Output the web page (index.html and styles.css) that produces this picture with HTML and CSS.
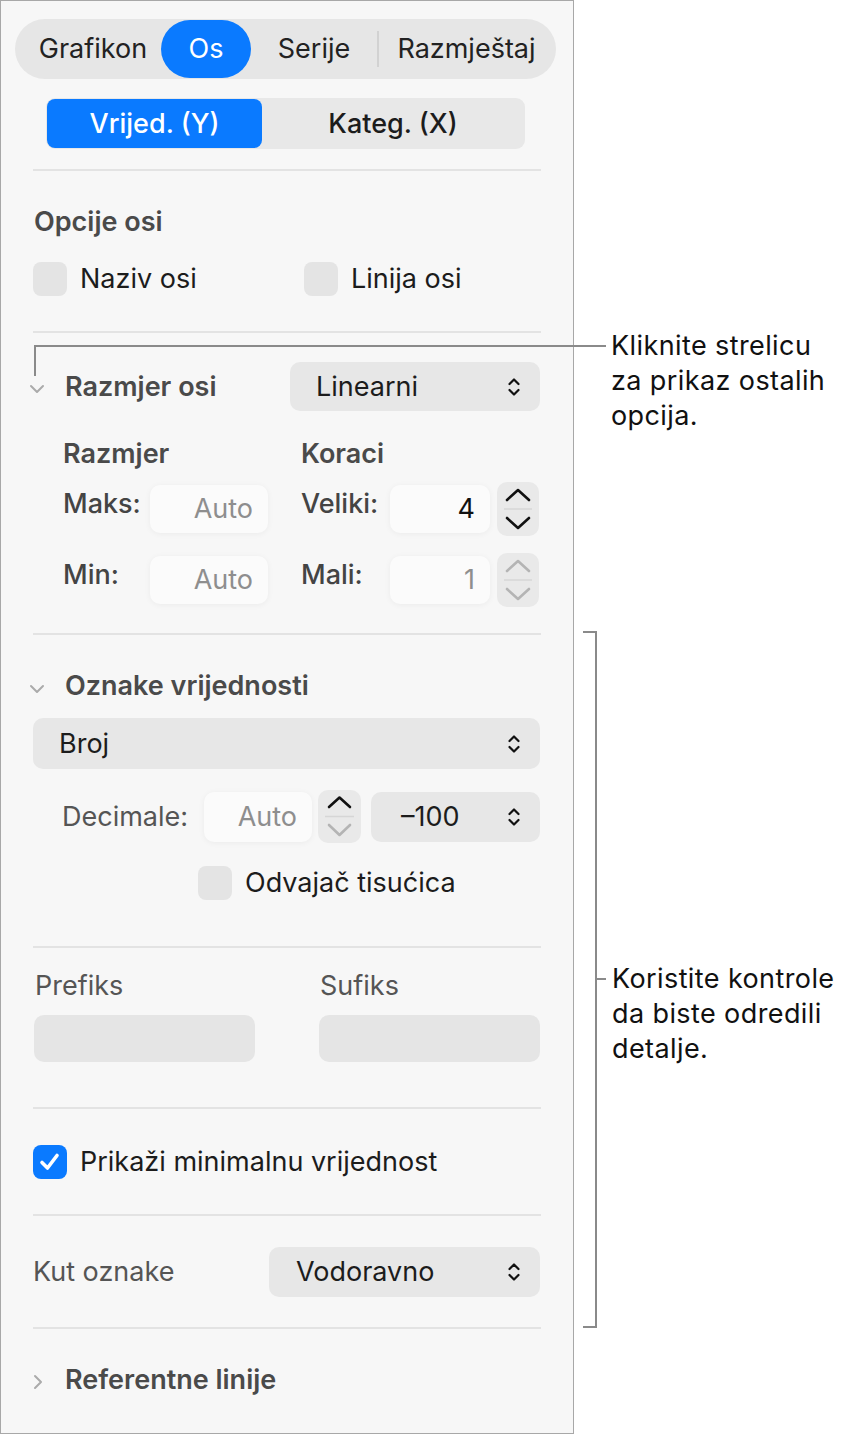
FILE: index.html
```html
<!DOCTYPE html>
<html lang="hr">
<head>
    <meta charset="UTF-8">
    <title>Os - Vrijednost</title>
    <link rel="stylesheet" href="styles.css">
</head>
<body>
    <div class="page">
        <div class="panel">
            <div class="tabs">
                <div class="tab tab-chart">Grafikon</div>
                <div class="tab tab-axis active">Os</div>
                <div class="tab tab-series">Serije</div>
                <div class="tab-divider"></div>
                <div class="tab tab-layout">Razmještaj</div>
            </div>

            <div class="segmented">
                <div class="seg seg-y active">Vrijed. (Y)</div>
                <div class="seg seg-x">Kateg. (X)</div>
            </div>

            <div class="sep sep-1"></div>

            <h3 class="heading heading-options">Opcije osi</h3>
            <div class="check-grid">
                <label class="check"><span class="box"></span>Naziv osi</label>
                <label class="check"><span class="box"></span>Linija osi</label>
            </div>

            <div class="sep sep-2"></div>

            <div class="disclosure-row scale-title">
                <span class="disclosure">
                    <svg width="16" height="10" viewBox="0 0 16 10"><path d="M2 2 L8 8 L14 2" /></svg>
                </span>
                <span class="disclosure-label">Razmjer osi</span>
                <div class="popup popup-scale">
                    <span>Linearni</span>
                    <svg class="updown" width="14" height="22" viewBox="0 0 14 22"><path d="M2.5 8 L7 3.5 L11.5 8 M2.5 14 L7 18.5 L11.5 14" /></svg>
                </div>
            </div>

            <div class="scale-head">
                <span class="col-a">Razmjer</span>
                <span class="col-b">Koraci</span>
            </div>
            <div class="scale-row row-max">
                <span class="lbl lbl-a">Maks:</span>
                <div class="field field-a">Auto</div>
                <span class="lbl lbl-b">Veliki:</span>
                <div class="field field-b dark">4</div>
                <div class="stepper">
                    <svg width="42" height="54" viewBox="0 0 42 54">
                        <path class="chev" d="M10 18 L21 8 L32 18" />
                        <line class="mid" x1="7" y1="27" x2="35" y2="27" />
                        <path class="chev" d="M10 36 L21 46 L32 36" />
                    </svg>
                </div>
            </div>
            <div class="scale-row row-min">
                <span class="lbl lbl-a">Min:</span>
                <div class="field field-a">Auto</div>
                <span class="lbl lbl-b">Mali:</span>
                <div class="field field-b">1</div>
                <div class="stepper">
                    <svg width="42" height="54" viewBox="0 0 42 54">
                        <path class="chev off" d="M10 18 L21 8 L32 18" />
                        <line class="mid" x1="7" y1="27" x2="35" y2="27" />
                        <path class="chev off" d="M10 36 L21 46 L32 36" />
                    </svg>
                </div>
            </div>

            <div class="sep sep-3"></div>

            <div class="disclosure-row labels-title">
                <span class="disclosure">
                    <svg width="16" height="10" viewBox="0 0 16 10"><path d="M2 2 L8 8 L14 2" /></svg>
                </span>
                <span class="disclosure-label">Oznake vrijednosti</span>
            </div>
            <div class="popup popup-format">
                <span>Broj</span>
                <svg class="updown" width="14" height="22" viewBox="0 0 14 22"><path d="M2.5 8 L7 3.5 L11.5 8 M2.5 14 L7 18.5 L11.5 14" /></svg>
            </div>
            <div class="decimal-row">
                <span class="lbl-plain">Decimale:</span>
                <div class="field field-dec">Auto</div>
                <div class="stepper stepper-dec">
                    <svg width="43" height="53" viewBox="0 0 43 53">
                        <path class="chev" d="M11 17 L21.5 7.5 L32 17" />
                        <line class="mid" x1="7" y1="26.5" x2="36" y2="26.5" />
                        <path class="chev off" d="M11 35 L21.5 45 L32 35" />
                    </svg>
                </div>
                <div class="popup popup-neg">
                    <span>–100</span>
                    <svg class="updown" width="14" height="22" viewBox="0 0 14 22"><path d="M2.5 8 L7 3.5 L11.5 8 M2.5 14 L7 18.5 L11.5 14" /></svg>
                </div>
            </div>
            <label class="check check-thousands"><span class="box"></span>Odvajač tisućica</label>

            <div class="sep sep-4"></div>

            <div class="affix-grid">
                <span class="lbl-plain">Prefiks</span>
                <span class="lbl-plain">Sufiks</span>
                <div class="affix-field"></div>
                <div class="affix-field"></div>
            </div>

            <div class="sep sep-5"></div>

            <label class="check check-min">
                <span class="box on">
                    <svg width="33" height="33" viewBox="0 0 33 33"><path d="M9 17.5 L14.5 23 L24 10.5" /></svg>
                </span>Prikaži minimalnu vrijednost
            </label>

            <div class="sep sep-6"></div>

            <div class="angle-row">
                <span class="lbl-plain">Kut oznake</span>
                <div class="popup popup-angle">
                    <span>Vodoravno</span>
                    <svg class="updown" width="14" height="22" viewBox="0 0 14 22"><path d="M2.5 8 L7 3.5 L11.5 8 M2.5 14 L7 18.5 L11.5 14" /></svg>
                </div>
            </div>

            <div class="sep sep-7"></div>

            <div class="disclosure-row ref-title">
                <span class="disclosure">
                    <svg width="14" height="18" viewBox="0 0 14 18"><path d="M5 3 L11 9 L5 15" /></svg>
                </span>
                <span class="disclosure-label">Referentne linije</span>
            </div>
        </div>

        <!-- callouts drawn over the screenshot -->
        <div class="callout-line"></div>
        <p class="callout-text callout-1">Kliknite strelicu<br>za prikaz ostalih<br>opcija.</p>
        <div class="bracket"></div>
        <div class="bracket-tick"></div>
        <p class="callout-text callout-2">Koristite kontrole<br>da biste odredili<br>detalje.</p>
    </div>
</body>
</html>
```

FILE: styles.css
```css
:root {
    --panel-bg: #f7f7f7;
    --control-bg: #e7e7e7;
    --sep-color: #e3e3e3;
    --blue: #0a7aff;
    --text: #1c1c1c;
    --heading: #4a4a4a;
    --muted: #555;
    --callout: #8a8a8a;
}

* {
    box-sizing: border-box;
    margin: 0;
    padding: 0;
}

body {
    background: #fff;
    font-family: Inter, "Noto Sans", sans-serif;
    font-size: 27px;
    line-height: 32px;
    color: var(--text);
}

.page {
    position: relative;
    width: 851px;
    height: 1434px;
}

.panel {
    width: 574px;
    height: 1434px;
    background: var(--panel-bg);
    border: 1px solid #a8a8a8;
    overflow: hidden;
}

/* top tabs */
.tabs {
    display: flex;
    align-items: center;
    width: 541px;
    height: 60px;
    margin: 18px 0 0 14px;
    padding: 1px 0 1px 10px;
    background: #e6e6e6;
    border-radius: 30px;
}

.tab {
    height: 58px;
    line-height: 58px;
    text-align: center;
    color: #222;
}

.tab-chart { width: 136px; }
.tab-axis { width: 90px; }
.tab-series { width: 126px; }
.tab-layout { width: 175px; }

.tab.active {
    background: var(--blue);
    color: #fff;
    border-radius: 29px;
}

.tab-divider {
    width: 2px;
    height: 36px;
    background: #d2d2d2;
}

/* Y / X switch */
.segmented {
    display: flex;
    width: 479px;
    height: 51px;
    margin: 19px 0 0 45px;
    padding: 1px;
    background: #e8e8e8;
    border-radius: 9px;
}

.seg {
    line-height: 49px;
    text-align: center;
    font-weight: 500;
}

.seg-y { width: 215px; }
.seg-x { flex: 1; }

.seg.active {
    background: var(--blue);
    color: #fff;
    border-radius: 8px;
}

.sep {
    height: 2px;
    margin: 0 32px;
    background: var(--sep-color);
}

.sep-1 { margin-top: 20px; }
.sep-2 { margin-top: 35px; }
.sep-3 { margin-top: 26px; }
.sep-4 { margin-top: 46px; }
.sep-5 { margin-top: 45px; }
.sep-6 { margin-top: 35px; }
.sep-7 { margin-top: 30px; }

.heading {
    font-size: 27px;
    font-weight: 600;
    color: var(--heading);
    padding-left: 33px;
}

.heading-options { margin-top: 35px; }

/* checkboxes */
.check-grid {
    display: grid;
    grid-template-columns: 271px 1fr;
    margin: 24px 0 0 32px;
}

.check {
    display: flex;
    align-items: center;
    height: 34px;
}

.box {
    flex: none;
    width: 34px;
    height: 34px;
    margin-right: 13px;
    background: #e4e4e4;
    border-radius: 8px;
}

.box.on {
    background: var(--blue);
}

.box.on svg path {
    fill: none;
    stroke: #fff;
    stroke-width: 3.6;
    stroke-linecap: round;
    stroke-linejoin: round;
}

.check-thousands {
    margin: 23px 0 0 197px;
}

.check-min {
    margin: 36px 0 0 32px;
}

/* disclosure rows */
.disclosure-row {
    display: flex;
    align-items: center;
    padding: 0 33px 0 27px;
}

.disclosure {
    display: flex;
    align-items: center;
    justify-content: center;
    width: 18px;
    margin-right: 19px;
}

.disclosure svg path {
    fill: none;
    stroke: #ababab;
    stroke-width: 2;
    stroke-linecap: round;
    stroke-linejoin: round;
}

.disclosure-label {
    font-weight: 600;
    color: var(--heading);
}

.scale-title {
    height: 49px;
    margin-top: 29px;
}

.scale-title .disclosure { margin-top: 4px; }

.labels-title {
    margin-top: 35px;
}

.labels-title .disclosure { margin-top: 6px; }

.ref-title {
    margin-top: 35px;
}

.ref-title .disclosure { margin-top: 4px; }

/* popups */
.popup {
    display: flex;
    align-items: center;
    justify-content: space-between;
    height: 50px;
    padding: 0 19px 0 26px;
    background: var(--control-bg);
    border-radius: 10px;
}

.updown path {
    fill: none;
    stroke: #111;
    stroke-width: 2.2;
    stroke-linecap: round;
    stroke-linejoin: round;
}

.popup-scale {
    width: 250px;
    height: 49px;
    margin-left: auto;
}

.popup-format {
    height: 51px;
    margin: 16px 33px 0 32px;
}

.popup-neg {
    flex: 1;
    margin-left: 10px;
    padding-left: 30px;
}

.popup-angle {
    width: 271px;
    padding-left: 27px;
}

/* scale fields */
.scale-head {
    display: flex;
    height: 32px;
    margin-top: 27px;
    padding-left: 62px;
    font-weight: 600;
    color: var(--heading);
}

.col-a { width: 238px; }

.scale-row {
    display: flex;
    align-items: center;
    height: 54px;
    padding-left: 62px;
}

.row-max { margin-top: 12px; }
.row-min { margin-top: 17px; }

.lbl {
    align-self: flex-start;
    margin-top: 6px;
    font-weight: 500;
    color: #444;
}

.lbl-a { width: 87px; }
.lbl-b { width: 89px; margin-left: 33px; }

.field {
    height: 48px;
    line-height: 48px;
    text-align: right;
    padding-right: 15px;
    color: #8e8e8e;
    background: #fbfbfb;
    border-radius: 10px;
    box-shadow: 0 1px 6px rgba(0, 0, 0, 0.05);
}

.field.dark { color: #111; }

.field-a { width: 118px; }
.field-b { width: 100px; }

.stepper {
    width: 42px;
    height: 54px;
    margin-left: 7px;
    background: #e9e9e9;
    border-radius: 10px;
}

.stepper svg { display: block; }

.stepper .chev {
    fill: none;
    stroke: #111;
    stroke-width: 2.6;
    stroke-linecap: round;
    stroke-linejoin: round;
}

.stepper .chev.off { stroke: #b4b4b4; }

.stepper .mid {
    stroke: #d6d6d6;
    stroke-width: 1.5;
}

/* decimals */
.decimal-row {
    display: flex;
    align-items: center;
    height: 53px;
    margin: 21px 33px 0 61px;
}

.lbl-plain {
    color: var(--muted);
}

.decimal-row .lbl-plain { width: 142px; }

.field-dec {
    width: 108px;
    height: 50px;
    line-height: 50px;
}

.stepper-dec {
    width: 43px;
    height: 53px;
    margin-left: 6px;
}

/* prefix / suffix */
.affix-grid {
    display: grid;
    grid-template-columns: 221px 221px;
    column-gap: 64px;
    row-gap: 13px;
    margin: 22px 0 0 33px;
}

.affix-grid .lbl-plain { padding-left: 1px; }

.affix-field {
    height: 47px;
    background: #e5e5e5;
    border-radius: 10px;
}

/* label angle */
.angle-row {
    display: flex;
    align-items: center;
    justify-content: space-between;
    height: 50px;
    margin: 31px 33px 0 32px;
}

/* callouts */
.callout-line {
    position: absolute;
    left: 34px;
    top: 345px;
    width: 572px;
    height: 31px;
    border-top: 2px solid var(--callout);
    border-left: 2px solid var(--callout);
}

.callout-text {
    position: absolute;
    font-size: 27px;
    line-height: 35px;
    letter-spacing: 0.4px;
    color: #111;
}

.callout-1 {
    left: 611px;
    top: 328px;
}

.callout-2 {
    left: 612px;
    top: 961px;
}

.bracket {
    position: absolute;
    left: 583px;
    top: 631px;
    width: 14px;
    height: 697px;
    border: 2px solid var(--callout);
    border-left: none;
}

.bracket-tick {
    position: absolute;
    left: 596px;
    top: 978px;
    width: 10px;
    height: 2px;
    background: var(--callout);
}
```
